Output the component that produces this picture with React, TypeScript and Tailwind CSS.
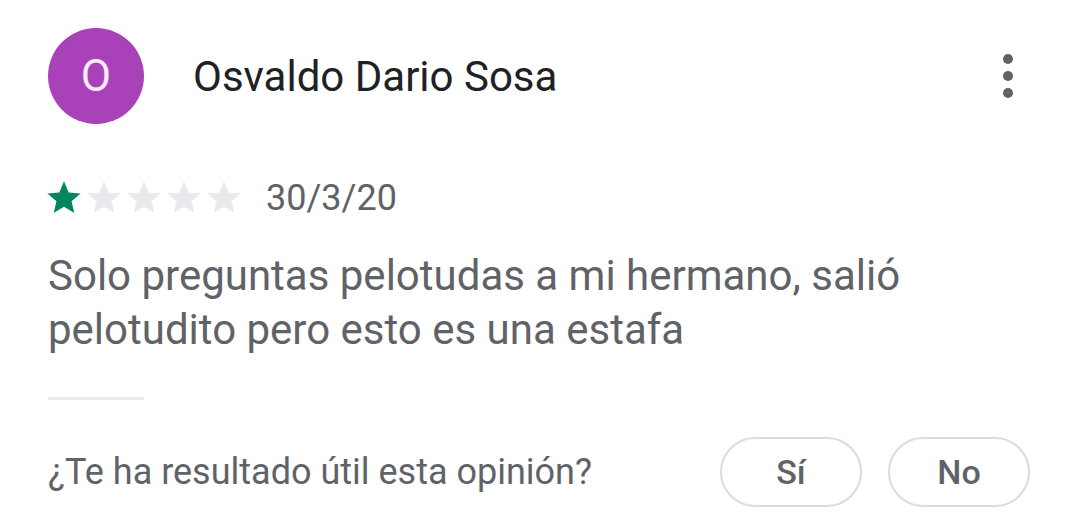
export default function App() {
  const stars = [true, false, false, false, false];
  return (
    <div className="h-[527px] w-[1080px] overflow-hidden bg-white font-['Roboto',sans-serif]">
      <div className="flex items-center pl-[48px] pr-[67px] pt-[28px]">
        <div className="flex h-[96px] w-[96px] items-center justify-center rounded-full bg-[#a942b8] text-[44px] text-[#fbe9fd]">
          O
        </div>
        <div className="ml-[49px] flex-1 text-[42px] text-[#202124]">Osvaldo Dario Sosa</div>
        <div className="flex flex-col gap-[7px]">
          <span className="h-[10px] w-[10px] rounded-full bg-[#5f6368]" />
          <span className="h-[10px] w-[10px] rounded-full bg-[#5f6368]" />
          <span className="h-[10px] w-[10px] rounded-full bg-[#5f6368]" />
        </div>
      </div>

      <div className="mt-[54px] flex h-[40px] items-center pl-[44px]">
        <div className="flex">
          {stars.map((on, i) => (
            <svg key={i} viewBox="0 0 24 24" className="h-[40px] w-[40px]">
              <path
                d="M12 17.27L18.18 21l-1.64-7.03L22 9.24l-7.19-.61L12 2 9.19 8.63 2 9.24l5.46 4.73L5.82 21z"
                fill={on ? "#01875f" : "#e8eaed"}
              />
            </svg>
          ))}
        </div>
        <span className="ml-[22px] text-[36px] text-[#5f6368]">30/3/20</span>
      </div>

      <p className="mt-[31px] pl-[48px] pr-[60px] text-[42px] leading-[54px] text-[#5f6368]">
        Solo preguntas pelotudas a mi hermano, salió
        <br />
        pelotudito pero esto es una estafa
      </p>

      <div className="ml-[48px] mt-[40px] h-[3px] w-[96px] bg-[#e8eaed]" />

      <div className="mt-[37px] flex items-center pl-[48px] pr-[50px]">
        <span className="flex-1 text-[36px] text-[#5f6368]">¿Te ha resultado útil esta opinión?</span>
        <div className="flex gap-[26px]">
          <button className="flex h-[70px] w-[142px] items-center justify-center rounded-full border-2 border-[#dadce0] text-[34px] font-medium text-[#5f6368]">
            Sí
          </button>
          <button className="flex h-[70px] w-[142px] items-center justify-center rounded-full border-2 border-[#dadce0] text-[34px] font-medium text-[#5f6368]">
            No
          </button>
        </div>
      </div>
    </div>
  );
}
